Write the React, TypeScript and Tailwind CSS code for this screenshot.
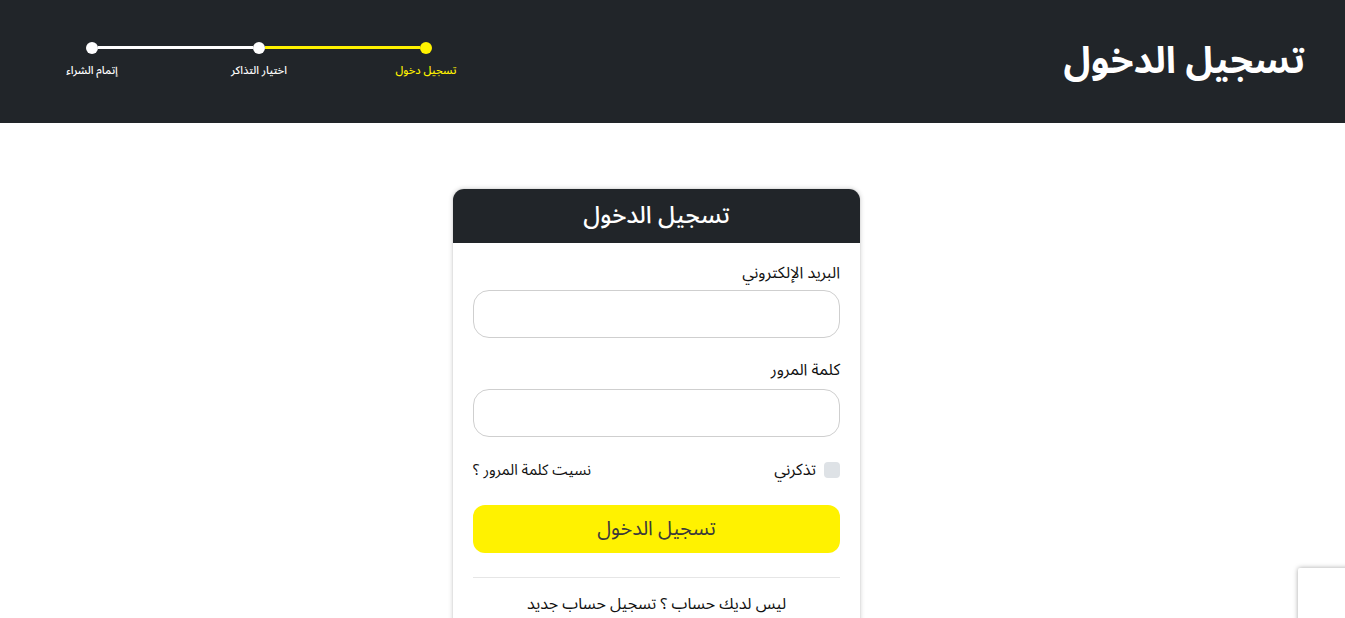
import React from 'react';

const steps = [
  { label: 'تسجيل دخول', active: true },
  { label: 'اختيار التذاكر', active: false },
  { label: 'إتمام الشراء', active: false },
];

const Stepper: React.FC = () => (
  <div className="flex items-start mb-[3px]">
    {steps.map((step, i) => (
      <React.Fragment key={step.label}>
        {i > 0 && (
          <div
            className={
              'h-[3px] w-[155px] mt-[4.5px] ' + (i === 1 ? 'bg-[#fff200]' : 'bg-white')
            }
          />
        )}
        <div className="flex flex-col items-center w-3">
          <div className={'size-3 rounded-full ' + (step.active ? 'bg-[#fff200]' : 'bg-white')} />
          <span
            className={
              'mt-[9px] whitespace-nowrap text-[11px] font-medium leading-4 ' +
              (step.active ? 'text-[#fff200]' : 'text-white')
            }
          >
            {step.label}
          </span>
        </div>
      </React.Fragment>
    ))}
  </div>
);

const App: React.FC = () => {
  return (
    <div dir="rtl" className="min-h-screen bg-white font-['Noto_Sans_Arabic','Noto_Sans','DejaVu_Sans',sans-serif] text-[#111]">
      {/* top bar */}
      <header className="h-[123px] bg-[#212529] flex items-center justify-between pr-10 pl-[86px]">
        <h1 className="text-[37px] font-bold text-white leading-none">تسجيل الدخول</h1>
        <Stepper />
      </header>

      {/* login card */}
      <div className="w-[409px] ml-[452px] mr-auto mt-[65px] rounded-xl overflow-hidden border border-[#e3e3e3] shadow-[0_0_4px_rgba(0,0,0,0.15)] bg-white">
        <div className="h-[54px] bg-[#212529] flex items-center justify-center">
          <h2 className="text-2xl text-white font-medium">تسجيل الدخول</h2>
        </div>
        <div className="px-5 pt-[18px] pb-4">
          <label className="block text-base leading-6 mb-[5px]">البريد الإلكتروني</label>
          <input type="email" className="block w-full h-12 rounded-2xl border border-[#cfcfcf] px-3 outline-none" />

          <label className="block text-base leading-6 mt-5 mb-[7px]">كلمة المرور</label>
          <input type="password" className="block w-full h-12 rounded-2xl border border-[#cfcfcf] px-3 outline-none" />

          <div className="flex items-center justify-between mt-[21px]">
            <label className="flex items-center gap-2 text-base">
              <span className="size-4 rounded bg-[#dee2e6]" />
              تذكرني
            </label>
            <a className="text-[15px]">نسيت كلمة المرور ؟</a>
          </div>

          <button className="mt-[23px] w-full h-12 rounded-xl bg-[#fff200] text-xl text-[#3a3a3a]">
            تسجيل الدخول
          </button>

          <hr className="mt-6 border-[#e6e6e6]" />

          <p className="mt-[14px] text-center text-base">ليس لديك حساب ؟ تسجيل حساب جديد</p>
        </div>
      </div>

      {/* captcha badge */}
      <div className="fixed left-[1298px] top-[568px] w-[256px] h-[60px] bg-white rounded-[2px] shadow-[0_0_5px_rgba(0,0,0,0.35)]" />
    </div>
  );
};

export default App;
